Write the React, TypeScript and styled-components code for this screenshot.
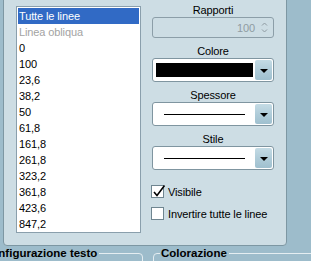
import styled, { createGlobalStyle } from 'styled-components'

const GlobalStyle = createGlobalStyle`
  html, body {
    margin: 0;
    padding: 0;
    background: #9dbccb;
    overflow: hidden;
  }
  body {
    font-family: "Liberation Sans", Arial, sans-serif;
    font-size: 11px;
    letter-spacing: -0.12px;
    color: #000;
  }
`

const Screen = styled.div`
  width: 311px;
  height: 261px;
  overflow: hidden;
  display: flex;
  flex-direction: column;
`

const Panel = styled.section`
  box-sizing: border-box;
  margin: -10px 0 0 3px;
  width: 284px;
  height: 256px;
  flex-shrink: 0;
  border: 1px solid #7d97a3;
  border-radius: 4px;
  background: #cddde4;
  padding: 15px 12px 0 12px;
  display: flex;
  gap: 11px;
  align-items: flex-start;
`

const ListBox = styled.ul`
  box-sizing: border-box;
  margin: 0;
  list-style: none;
  width: 125px;
  height: 227px;
  padding: 1px;
  background: #fff;
  border: 1px solid #8a9fac;
  overflow: hidden;
`

const Item = styled.li<{ $selected?: boolean; $disabled?: boolean }>`
  height: 16px;
  line-height: 16px;
  padding-left: 1px;
  white-space: nowrap;
  background: ${p => (p.$selected ? '#316ac5' : 'transparent')};
  color: ${p => (p.$selected ? '#fff' : p.$disabled ? '#a3a3a3' : '#000')};
`

const Column = styled.div`
  width: 122px;
  margin-top: -3px;
  display: flex;
  flex-direction: column;
`

const Label = styled.div<{ $first?: boolean }>`
  text-align: center;
  line-height: 14px;
  height: 14px;
  margin-top: ${p => (p.$first ? 0 : 6)}px;
`

const Spin = styled.div`
  box-sizing: border-box;
  height: 21px;
  border: 1px solid #8c9ea8;
  border-radius: 3px;
  display: flex;
  align-items: center;
  justify-content: flex-end;
  padding-right: 5px;
  color: #8f9ba2;
`

const SpinValue = styled.span`
  margin-right: 6px;
`

const SpinArrows = styled.svg`
  display: block;
`

const Combo = styled.div`
  box-sizing: border-box;
  height: 24px;
  border: 1px solid #7f95a0;
  border-radius: 3px;
  background: #fff;
  display: flex;
  align-items: center;
  padding: 1px;
`

const ComboValue = styled.div`
  flex: 1;
  display: flex;
  align-items: center;
  padding: 0 10px 0 2px;
`

const Swatch = styled.div`
  flex: 1;
  height: 14px;
  background: #000;
  margin-right: -8px;
`

const LineSample = styled.div`
  flex: 1;
  height: 1px;
  background: #000;
  margin-left: 8px;
`

const DropButton = styled.div`
  width: 17px;
  height: 20px;
  border-radius: 2px;
  background: linear-gradient(180deg, #c4dbe5 0%, #aecbd8 55%, #9fc0cf 100%);
  display: flex;
  align-items: center;
  justify-content: center;

  &::after {
    content: '';
    border-left: 4px solid transparent;
    border-right: 4px solid transparent;
    border-top: 4px solid #000;
    margin-top: 1px;
  }
`

const CheckRow = styled.label<{ $gap: number }>`
  display: flex;
  align-items: center;
  height: 13px;
  margin-top: ${p => p.$gap}px;
  margin-left: -1px;
  gap: 4px;
`

const Box = styled.span`
  position: relative;
  box-sizing: border-box;
  width: 13px;
  height: 13px;
  border: 1px solid #6f8590;
  background: #fff;
  flex-shrink: 0;
`

const Tick = styled.svg`
  position: absolute;
  left: 0;
  top: -2px;
  overflow: visible;
`

const GroupRow = styled.div`
  display: flex;
  flex-shrink: 0;
`

const Group = styled.fieldset<{ $left: number; $width: number }>`
  box-sizing: border-box;
  margin: 0 0 0 ${p => p.$left}px;
  width: ${p => p.$width}px;
  min-width: 0;
  height: 40px;
  flex-shrink: 0;
  padding: 0 6px;
  border: 1px solid #e4edf1;
  border-radius: 4px;
`

const GroupTitle = styled.legend`
  padding: 0 2px 0 1px;
  font-size: 11.5px;
  font-weight: bold;
  letter-spacing: 0;
  line-height: 14px;
  white-space: nowrap;
`

const lines = [
  '0', '100', '23,6', '38,2', '50', '61,8', '161,8', '261,8',
  '323,2', '361,8', '423,6', '847,2',
]

export default function App() {
  return (
    <Screen>
      <GlobalStyle />
      <Panel>
        <ListBox>
          <Item $selected>Tutte le linee</Item>
          <Item $disabled>Linea obliqua</Item>
          {lines.map(v => (
            <Item key={v}>{v}</Item>
          ))}
        </ListBox>
        <Column>
          <Label $first>Rapporti</Label>
          <Spin>
            <SpinValue>100</SpinValue>
            <SpinArrows width="7" height="13" viewBox="0 0 7 13">
              <path d="M1 4.5 L3.5 2 L6 4.5" fill="none" stroke="#8f9ba2" strokeWidth="1" />
              <path d="M1 8.5 L3.5 11 L6 8.5" fill="none" stroke="#8f9ba2" strokeWidth="1" />
            </SpinArrows>
          </Spin>
          <Label>Colore</Label>
          <Combo>
            <ComboValue>
              <Swatch />
            </ComboValue>
            <DropButton />
          </Combo>
          <Label>Spessore</Label>
          <Combo>
            <ComboValue>
              <LineSample />
            </ComboValue>
            <DropButton />
          </Combo>
          <Label>Stile</Label>
          <Combo>
            <ComboValue>
              <LineSample />
            </ComboValue>
            <DropButton />
          </Combo>
          <CheckRow $gap={15}>
            <Box>
              <Tick width="13" height="13" viewBox="0 0 13 13">
                <path d="M2 8 L5 11.5 L12.5 1.5" fill="none" stroke="#000" strokeWidth="1.6" />
              </Tick>
            </Box>
            Visibile
          </CheckRow>
          <CheckRow $gap={9}>
            <Box />
            Invertire tutte le linee
          </CheckRow>
        </Column>
      </Panel>
      <GroupRow>
        <Group $left={-25} $width={168}>
          <GroupTitle>Configurazione testo</GroupTitle>
        </Group>
        <Group $left={10} $width={200}>
          <GroupTitle>Colorazione</GroupTitle>
        </Group>
      </GroupRow>
    </Screen>
  )
}
